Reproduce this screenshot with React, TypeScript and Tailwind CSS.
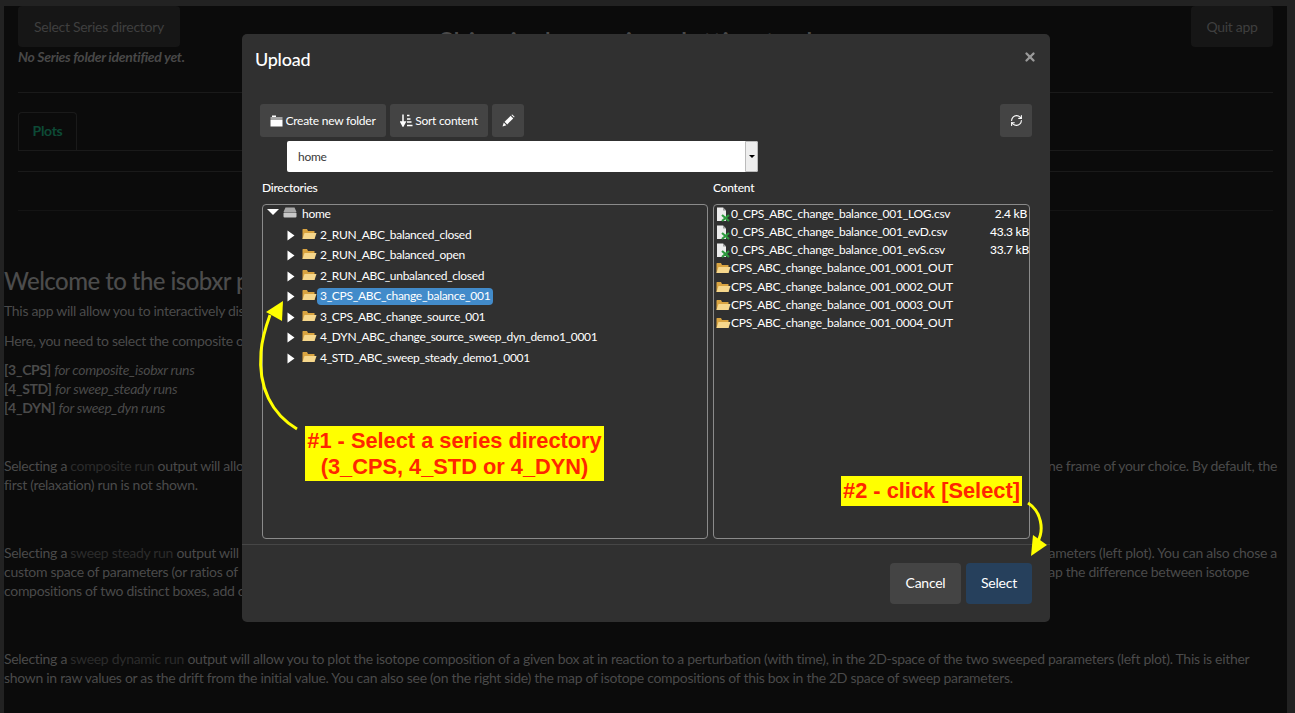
import React from "react";
import { RefreshCw, X } from "lucide-react";

const dirs = [
  "2_RUN_ABC_balanced_closed",
  "2_RUN_ABC_balanced_open",
  "2_RUN_ABC_unbalanced_closed",
  "3_CPS_ABC_change_balance_001",
  "3_CPS_ABC_change_source_001",
  "4_DYN_ABC_change_source_sweep_dyn_demo1_0001",
  "4_STD_ABC_sweep_steady_demo1_0001",
];

const csvFiles = [
  { name: "0_CPS_ABC_change_balance_001_LOG.csv", size: "2.4 kB" },
  { name: "0_CPS_ABC_change_balance_001_evD.csv", size: "43.3 kB" },
  { name: "0_CPS_ABC_change_balance_001_evS.csv", size: "33.7 kB" },
];

const outFolders = [
  "CPS_ABC_change_balance_001_0001_OUT",
  "CPS_ABC_change_balance_001_0002_OUT",
  "CPS_ABC_change_balance_001_0003_OUT",
  "CPS_ABC_change_balance_001_0004_OUT",
];

/* ---------------- SMALL ICONS ---------------- */
const FolderIcon = () => (
  <svg width="15" height="12" viewBox="0 0 15 12" className="shrink-0">
    <path d="M0.5 1.5 L0.5 11 L12.5 11 L12.5 3 L6 3 L5 1 L1 1 Z" fill="#d9a441" />
    <path d="M2.5 5 L14.5 5 L12.5 11 L0.5 11 Z" fill="#f6d78c" />
  </svg>
);

const CsvIcon = () => (
  <svg width="14" height="15" viewBox="0 0 14 15" className="shrink-0">
    <path d="M1 0.5 H7 L10 3.5 V14 H1 Z" fill="#ececec" />
    <path d="M7 0.5 V3.5 H10 Z" fill="#9a9a9a" />
    <path d="M6 8 L13 14 M13 8 L6 14" stroke="#2e9a3e" strokeWidth="2.2" />
  </svg>
);

const Caret = () => (
  <svg width="8" height="11" viewBox="0 0 8 11" className="shrink-0">
    <path d="M0.5 0.5 L7.5 5.5 L0.5 10.5 Z" fill="#ffffff" />
  </svg>
);

const DriveIcon = () => (
  <svg width="14" height="11" viewBox="0 0 14 11" className="shrink-0">
    <path d="M2.5 0.5 H11.5 L13.5 5 H0.5 Z" fill="#a8a8a8" />
    <rect x="0.5" y="5.5" width="13" height="5" rx="1" fill="#c8c8c8" />
  </svg>
);

const TrayFolderIcon = () => (
  <svg width="13" height="12" viewBox="0 0 13 12" className="shrink-0">
    <path d="M2 0.5 H6 V2 H2 Z M0.5 2.5 H12.5 V3.5 H0.5 Z" fill="#ffffff" />
    <rect x="0.5" y="4.5" width="12" height="7" fill="#ffffff" />
  </svg>
);

const SortIcon = () => (
  <svg width="13" height="13" viewBox="0 0 13 13" className="shrink-0">
    <path d="M3 0.5 V10 M0.8 8 L3 12 L5.2 8 Z" stroke="#fff" strokeWidth="1.5" fill="#fff" />
    <path d="M7 1.5 H9.5 M7 5 H10.5 M7 8 H11.5 M7 11.5 H12.5" stroke="#fff" strokeWidth="1.6" />
  </svg>
);

const PencilIcon = () => (
  <svg width="13" height="13" viewBox="0 0 13 13">
    <path d="M0.5 12.5 L1.8 8.6 L4.4 11.2 Z" fill="#ffffff" />
    <path d="M2.6 7.8 L8.6 1.8 L11.2 4.4 L5.2 10.4 Z" fill="#ffffff" />
    <path d="M9.4 1 L10.2 0.4 L12.6 2.8 L12 3.6 Z" fill="#ffffff" />
  </svg>
);

const btn =
  "flex items-center justify-center h-[33px] bg-[#444444] rounded-[3px] text-white text-[12px]";

/* ---------------- MAIN COMPONENT ---------------- */
const App: React.FC = () => {
  return (
    <div className="relative h-[713px] w-[1295px] overflow-hidden bg-[#0b0b0b] font-['Lato','Noto_Sans',sans-serif] text-[#4a4a4a] text-[14px] leading-[19px] tracking-[-0.3px]">
      {/* ---------------- DIMMED PAGE ---------------- */}
      <div className="h-[6px] bg-[#222222]" />
      <div className="flex">
        <div className="w-[4px] h-[707px] bg-[#222222] shrink-0" />
        <div className="flex-1 pr-[10px]">
          <div className="pl-[14px] pr-[4px]">
            <div className="flex justify-between items-start h-[41px]">
              <div className="h-[41px] w-[162px] bg-[#161616] rounded-[4px] flex items-center justify-center text-[#3f3f3f]">
                Select Series directory
              </div>
              <h1 className="mt-[21px] mr-[120px] text-[28px] leading-[30px] font-medium text-[#4a4a4a]">
                Shiny isobxr series plotting tool
              </h1>
              <div className="h-[41px] w-[82px] bg-[#161616] rounded-[4px] flex items-center justify-center text-[#3f3f3f]">
                Quit app
              </div>
            </div>
            <div className="font-bold italic text-[#484848]">No Series folder identified yet.</div>
            <div className="mt-[26px] border-t border-[#1a1a1a]" />
            <div className="mt-[19px] border-b border-[#1a1a1a] h-[39px]">
              <div className="w-[59px] h-[39px] pb-[4px] border border-b-0 border-[#1a1a1a] rounded-t-[4px] flex items-center justify-center font-bold text-[#0d4a36]">
                Plots
              </div>
            </div>
            <div className="mt-[20px] border-t border-[#1a1a1a]" />
            <div className="mt-[38px] border-t border-[#141414]" />
          </div>

          <h2 className="mt-[55px] text-[24px] leading-[30px] font-medium tracking-[-0.55px] text-[#4c4c4c]">
            Welcome to the isobxr platform
          </h2>
          <p className="mt-[5px]">This app will allow you to interactively display</p>
          <p className="mt-[11px]">Here, you need to select the composite or sweep</p>
          <p className="mt-[10px]">
            <b>[3_CPS]</b> <i>for composite_isobxr runs</i>
            <br />
            <b>[4_STD]</b> <i>for sweep_steady runs</i>
            <br />
            <b>[4_DYN]</b> <i>for sweep_dyn runs</i>
          </p>

          <div className="mt-[39px] flex justify-between">
            <span>
              Selecting a <span className="text-[#2c2c2c]">composite run</span> output will allow
            </span>
            <span>ne frame of your choice. By default, the</span>
          </div>
          <div>first (relaxation) run is not shown.</div>

          <div className="mt-[49px] flex justify-between">
            <span>
              Selecting a <span className="text-[#2c2c2c]">sweep steady run</span> output will
            </span>
            <span>parameters (left plot). You can also chose a</span>
          </div>
          <div className="flex justify-between">
            <span>custom space of parameters (or ratios of</span>
            <span className="pr-[28px]">ap the difference between isotope</span>
          </div>
          <div>compositions of two distinct boxes, add or</div>

          <div className="mt-[49px] whitespace-nowrap">
            Selecting a <span className="text-[#2c2c2c]">sweep dynamic run</span> output will allow you to plot
            the isotope composition of a given box at in reaction to a perturbation (with time), in the 2D-space
            of the two sweeped parameters (left plot). This is either
          </div>
          <div>
            shown in raw values or as the drift from the initial value. You can also see (on the right side) the
            map of isotope compositions of this box in the 2D space of sweep parameters.
          </div>
        </div>
        <div className="w-[8px] h-[707px] bg-[#222222] shrink-0" />
      </div>

      {/* ---------------- MODAL ---------------- */}
      <div className="absolute left-[242px] top-[34px] w-[808px] h-[588px] bg-[#303030] rounded-[5px] text-white text-[12px] leading-[16px] tracking-[-0.25px] flex flex-col">
        <div className="flex justify-between items-start pl-[13px] pr-[13px] pt-[14px] h-[70px]">
          <span className="text-[18px] leading-[23px] font-medium tracking-[-0.25px]">Upload</span>
          <X size={14} strokeWidth={4} className="text-[#9a9a9a] mt-[2px]" />
        </div>

        <div className="flex-1 pl-[18px] pr-[18px]">
          <div className="flex gap-[4px]">
            <div className={`${btn} w-[126px] gap-[2px]`}>
              <TrayFolderIcon />
              Create new folder
            </div>
            <div className={`${btn} w-[98px] gap-[2px]`}>
              <SortIcon />
              Sort content
            </div>
            <div className={`${btn} w-[32px]`}>
              <PencilIcon />
            </div>
            <div className={`${btn} w-[32px] ml-auto`}>
              <RefreshCw size={13} strokeWidth={2} />
            </div>
          </div>

          <div className="ml-[27px] mt-[4px] w-[471px] h-[31px] bg-white rounded-[2px] flex justify-between items-center text-[#3a3a3a]">
            <span className="pl-[11px]">home</span>
            <span className="w-[13px] h-full bg-[#eeeeee] border border-[#bbbbbb] rounded-r-[2px] flex items-center justify-center">
              <span className="border-x-[3px] border-x-transparent border-t-[3px] border-t-black" />
            </span>
          </div>

          <div className="flex mt-[8px] mx-[2px] gap-[5px]">
            <div className="w-[446px]">
              <div className="font-medium">Directories</div>
              <div className="mt-[8px] h-[335px] border border-[#8a8a8a] rounded-[4px] pl-[4px] tracking-[-0.3px]">
                <div className="flex items-center h-[16px] mt-[1px]">
                  <span className="border-x-[6px] border-x-transparent border-t-[6px] border-t-white mb-[5px]" />
                  <span className="ml-[4px] mb-[3px]">
                    <DriveIcon />
                  </span>
                  <span className="ml-[5px]">home</span>
                </div>
                <div className="mt-[3px]">
                  {dirs.map((d, i) => (
                    <div key={d} className="flex items-center h-[20.5px] pl-[20px]">
                      <Caret />
                      <span className="ml-[7px] mb-[3px]">
                        <FolderIcon />
                      </span>
                      <span
                        className={`h-[17px] px-[3px] rounded-[4px] ${i === 3 ? "bg-[#428bca]" : ""}`}
                      >
                        {d}
                      </span>
                    </div>
                  ))}
                </div>
              </div>
            </div>

            <div className="w-[317px]">
              <div className="font-medium">Content</div>
              <div className="mt-[8px] h-[335px] border border-[#8a8a8a] rounded-[4px] pl-[2px]">
                {csvFiles.map((f, i) => (
                  <div key={f.name} className="flex items-center justify-between h-[18px]">
                    <span className="flex items-center gap-[1px]">
                      <CsvIcon />
                      {f.name}
                    </span>
                    <span className={`font-medium ${i === 0 ? "pr-[2px]" : ""}`}>{f.size}</span>
                  </div>
                ))}
                {outFolders.map((f) => (
                  <div key={f} className="flex items-center h-[18.4px]">
                    <FolderIcon />
                    {f}
                  </div>
                ))}
              </div>
            </div>
          </div>
        </div>

        <div className="h-[78px] border-t border-[#464646] flex justify-end items-start gap-[5px] pt-[18px] pr-[18px] text-[14px]">
          <div className="w-[71px] h-[41px] pb-[1px] bg-[#444444] rounded-[4px] flex items-center justify-center">
            Cancel
          </div>
          <div className="w-[66px] h-[41px] pb-[1px] bg-[#26405c] rounded-[4px] flex items-center justify-center">
            Select
          </div>
        </div>
      </div>

      {/* ---------------- ANNOTATIONS ---------------- */}
      <div className="absolute left-[305px] top-[426px] w-[299px] h-[55px] bg-[#ffff00] text-[#ff2600] text-center font-['Liberation_Sans',sans-serif] font-bold text-[21.8px] leading-[26px] tracking-normal pt-[2px] whitespace-nowrap">
        #1 - Select a series directory
        <br />
        (3_CPS, 4_STD or 4_DYN)
      </div>
      <div className="absolute left-[841px] top-[476px] w-[181px] h-[30px] bg-[#ffff00] text-[#ff2600] text-center font-['Liberation_Sans',sans-serif] font-bold text-[21.8px] leading-[30px] tracking-normal whitespace-nowrap">
        #2 - click [Select]
      </div>
      <svg className="absolute left-0 top-0 pointer-events-none" width="1295" height="713">
        <path d="M297 429 C272 414 258 388 261 352 C262 338 266 326 270 315" fill="none" stroke="#ffff00" strokeWidth="3" />
        <path d="M283 301 L282 321 L266 312 Z" fill="#ffff00" />
        <path d="M1028 503 C1041 511 1045 530 1037 543" fill="none" stroke="#ffff00" strokeWidth="3" />
        <path d="M1047 545 L1031 556 L1033 535 Z" fill="#ffff00" />
      </svg>
    </div>
  );
};

export default App;
